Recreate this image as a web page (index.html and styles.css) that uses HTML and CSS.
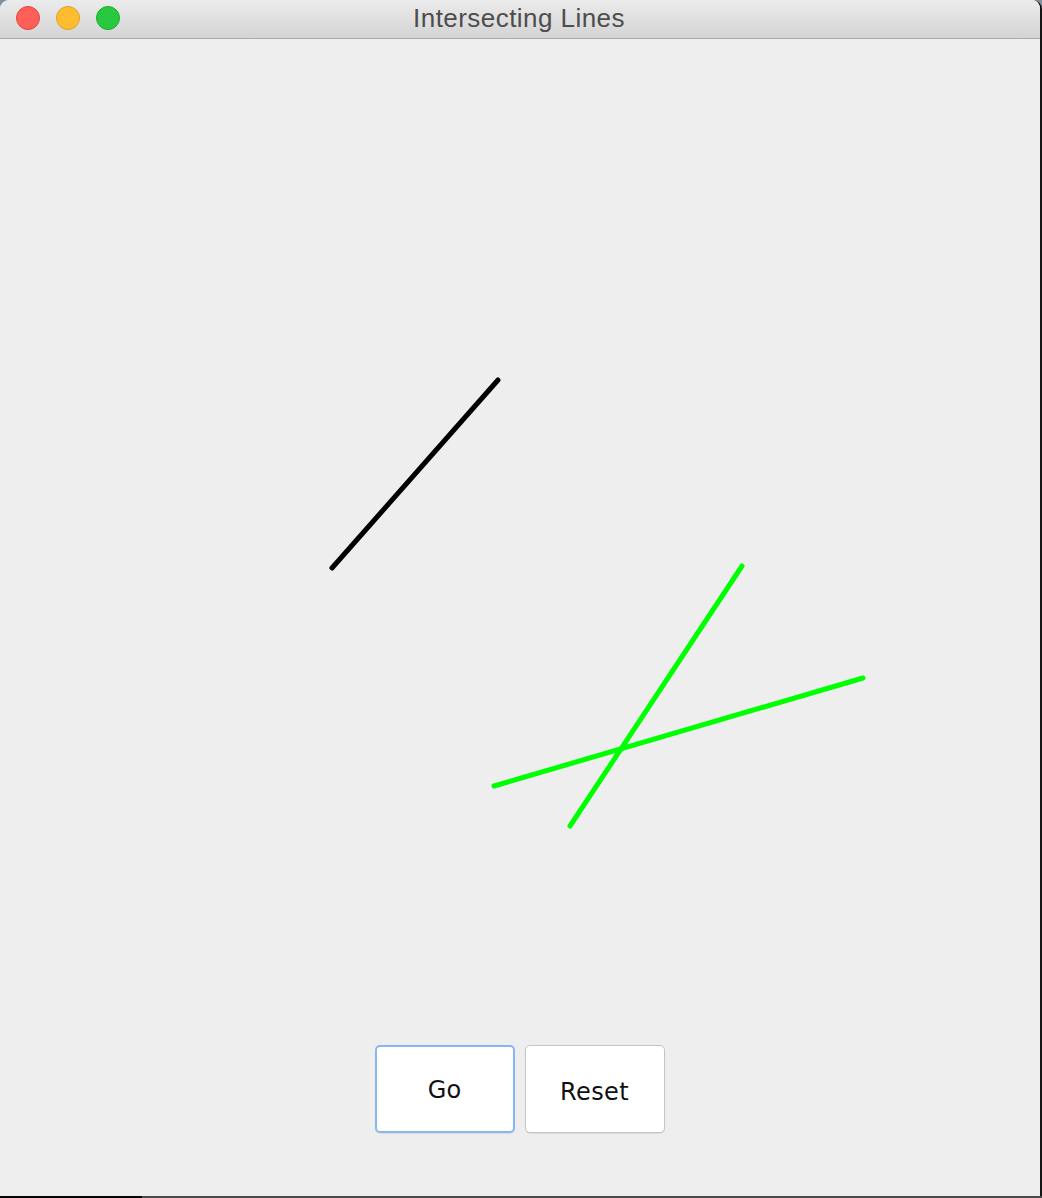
FILE: index.html
```html
<!DOCTYPE html>
<html>
<head>
<meta charset="utf-8">
<title>Intersecting Lines</title>
<link rel="stylesheet" href="styles.css">
</head>
<body>
<div class="screen">
  <div class="window">
    <div class="titlebar">
      <div class="lights">
        <span class="light red"></span>
        <span class="light yellow"></span>
        <span class="light green"></span>
      </div>
      <div class="title">Intersecting Lines</div>
    </div>
    <div class="content">
      <svg class="canvas" width="1040" height="1006" viewBox="0 39 1040 1006" xmlns="http://www.w3.org/2000/svg">
        <g stroke-width="5" stroke-linecap="round" fill="none">
          <line x1="332" y1="568" x2="498" y2="380" stroke="#000000"/>
          <line x1="742" y1="566" x2="570" y2="826" stroke="#00ff00"/>
          <line x1="494" y1="786" x2="863" y2="678" stroke="#00ff00"/>
        </g>
      </svg>
      <div class="buttons">
        <button class="btn focused">Go</button>
        <button class="btn spaced">Reset</button>
      </div>
    </div>
  </div>
  <div class="bottom">
    <div class="seg-dark"></div>
    <div class="seg-grey"></div>
  </div>
</div>
</body>
</html>
```
FILE: styles.css
```css
html, body {
  margin: 0;
  padding: 0;
  background: #151515;
}
.screen {
  width: 1042px;
  height: 1198px;
  display: flex;
  flex-direction: column;
  overflow: hidden;
  background: #7e8f9e;
}
.window {
  width: 1040px;
  height: 1196px;
  display: flex;
  flex-direction: column;
  background: #eeeeee;
  border-radius: 9px 9px 0 0;
  overflow: hidden;
  border-right: 2px solid #151515;
}
.titlebar {
  height: 38px;
  flex: 0 0 38px;
  border-bottom: 1px solid #acacac;
  background: linear-gradient(#ebebeb, #d4d4d4);
  position: relative;
  display: flex;
  align-items: center;
  justify-content: center;
}
.lights {
  position: absolute;
  left: 16px;
  top: 6px;
  display: flex;
  gap: 16px;
}
.light {
  width: 22px;
  height: 22px;
  border-radius: 50%;
  border: 1px solid;
}
.red { background: #fe5f57; border-color: #e0443e; }
.yellow { background: #febc2e; border-color: #dea123; }
.green { background: #28c840; border-color: #1aab29; }
.title {
  font-family: "Liberation Sans", Arial, sans-serif;
  font-size: 26px;
  letter-spacing: 0.45px;
  color: #4d4d4d;
  margin-left: -2px;
  margin-top: -1px;
}
.content {
  flex: 1;
  display: flex;
  flex-direction: column;
}
.canvas {
  display: block;
  flex: 0 0 1006px;
}
.buttons {
  display: flex;
  justify-content: center;
  gap: 10px;
  padding-right: 1px;
}
.btn {
  box-sizing: border-box;
  width: 140px;
  height: 88px;
  background: #ffffff;
  border: 1px solid #c4c4c4;
  border-radius: 5px;
  font-family: "DejaVu Sans", sans-serif;
  font-size: 24px;
  color: #111111;
  padding: 1px 0 0 0;
  margin: 0;
  box-shadow: 0 1px 1px rgba(0,0,0,0.08);
}
.btn.spaced {
  letter-spacing: 0.4px;
  padding-top: 6px;
}
.btn.focused {
  border: 2px solid #86b7ef;
}
.bottom {
  height: 2px;
  display: flex;
}
.seg-dark {
  width: 142px;
  background: #050505;
}
.seg-grey {
  flex: 1;
  background: #4a4a4a;
}
```
